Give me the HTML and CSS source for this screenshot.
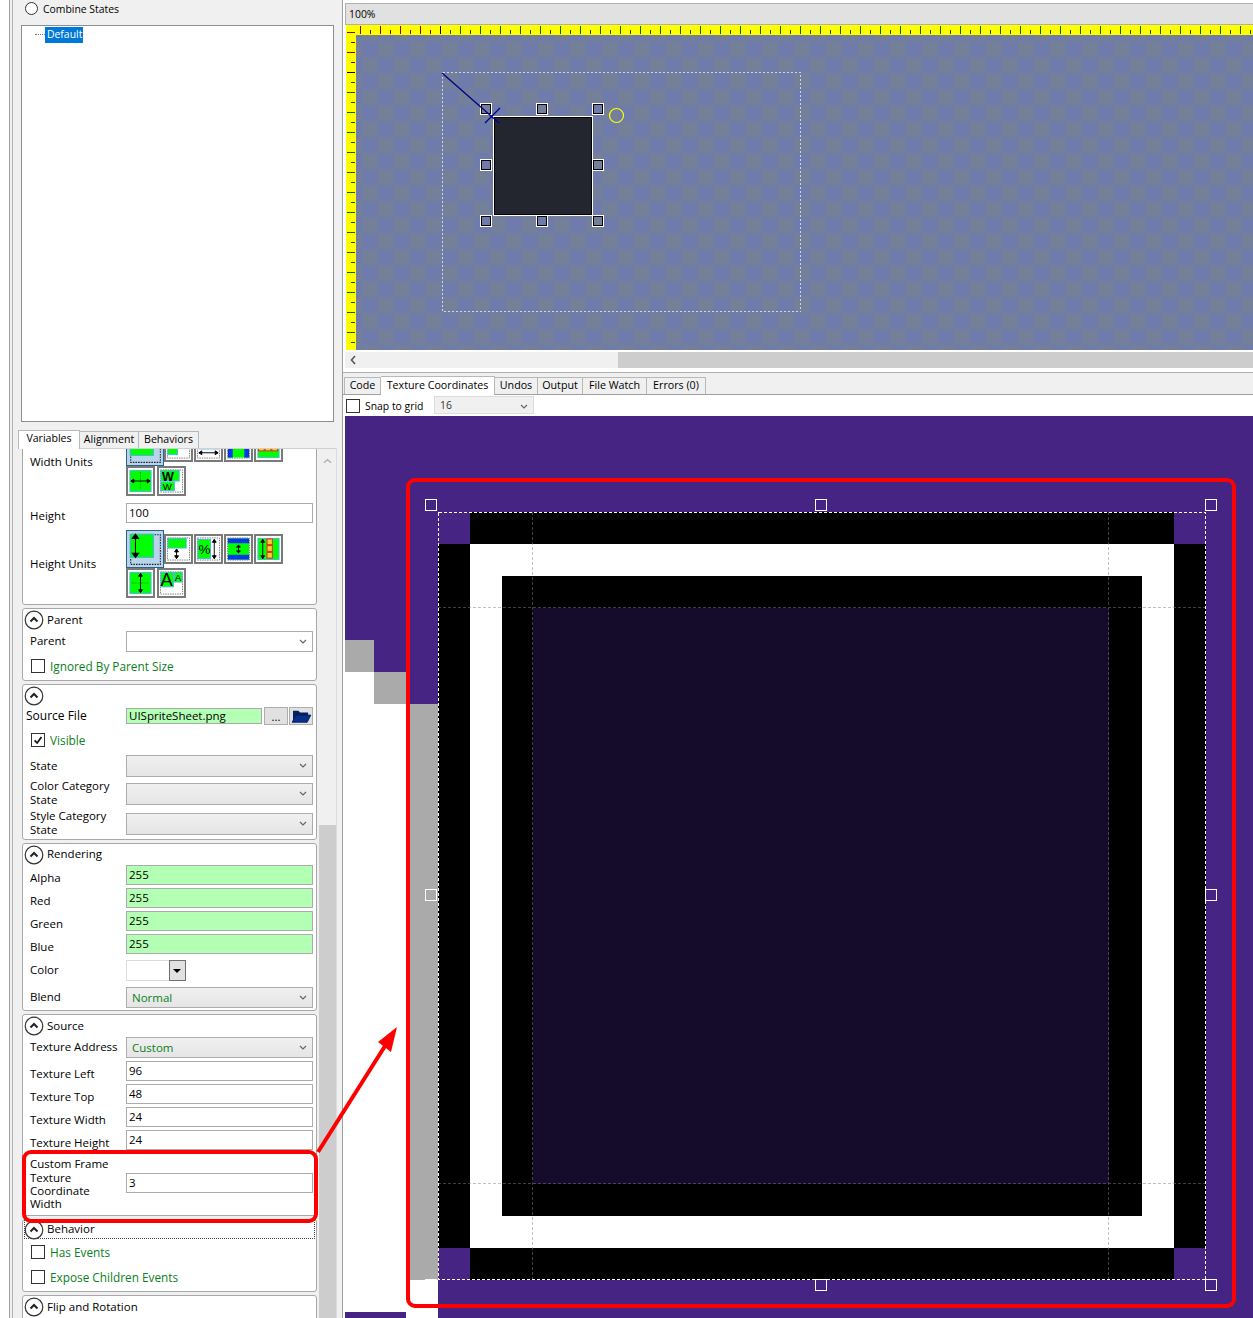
FILE: index.html
```html
<!DOCTYPE html>
<html>

<head>
    <title>Texture Coordinates</title>
    <link rel="stylesheet" href="styles.css">
</head>

<body>
    <!-- shared icons -->
    <svg class="defs" width="0" height="0">
        <defs>
            <symbol id="collapse" viewBox="0 0 20 20">
                <circle cx="10" cy="10" r="8.800" fill="#fff" stroke="#333" stroke-width="1.200"/>
                <path d="M6.500 11.500 10 8l3.500 3.500" fill="none" stroke="#222" stroke-width="2"/>
            </symbol>
            <symbol id="chevron" viewBox="0 0 8 5">
                <path d="M1 1 4 4l3-3" fill="none" stroke="#666" stroke-width="1.200"/>
            </symbol>
            <g id="abs-h">
                <rect x="3.500" y="3.500" width="28" height="28" fill="none" stroke="#223" stroke-dasharray="1.500 1"/>
                <rect x="3" y="3" width="22" height="22" fill="#0f0" stroke="#4db4e6"/>
                <path d="M8 3v22M5 7l3-4 3 4zM5 21l3 4 3-4z" fill="#000" stroke="#000"/>
            </g>
            <g id="rel-h">
                <rect x="1.500" y="1.500" width="23" height="23" fill="#fff" stroke="#777" stroke-dasharray="1.500 1"/>
                <rect x="2" y="2" width="19" height="10" fill="#0f0" stroke="#4db4e6"/>
                <path d="M11 13v10M9 16l2-3 2 3zM9 20l2 3 2-3z" fill="#000" stroke="#000"/>
            </g>
            <g id="pct-h">
                <rect x="1.500" y="1.500" width="23" height="23" fill="#fff" stroke="#777" stroke-dasharray="1.500 1"/>
                <rect x="2" y="3" width="13" height="20" fill="#0f0" stroke="#4db4e6"/>
                <text x="2.500" y="18" class="icon-pct">%</text>
                <path d="M19 3v20M17 6l2-3 2 3zM17 20l2 3 2-3z" fill="#000" stroke="#000"/>
            </g>
            <g id="ratio-h">
                <rect x="1.500" y="1.500" width="23" height="23" fill="#fff" stroke="#777" stroke-dasharray="1.500 1"/>
                <rect x="2" y="2" width="22" height="22" fill="#0f0"/>
                <rect x="2" y="2" width="22" height="5" fill="#0437e8"/>
                <rect x="2" y="19" width="22" height="5" fill="#0437e8"/>
                <path d="M13 9v8M11 11l2-2 2 2zM11 15l2 2 2-2z" fill="#000" stroke="#000"/>
            </g>
            <g id="kids-h">
                <rect x="2" y="2" width="22" height="22" fill="#0f0" stroke="#4db4e6"/>
                <path d="M7 3v20M5 6l2-3 2 3zM5 20l2 3 2-3z" fill="#000" stroke="#000"/>
                <rect x="11.500" y="2.500" width="5.500" height="6" fill="#fc3" stroke="#e22"/>
                <rect x="11.500" y="9.500" width="5.500" height="6" fill="#fc3" stroke="#e22"/>
                <rect x="11.500" y="16.500" width="5.500" height="6" fill="#fc3" stroke="#e22"/>
            </g>
            <g id="fill-h">
                <rect x="2" y="2" width="22" height="22" fill="#0f0" stroke="#4db4e6"/>
                <path d="M4 13h18" stroke="#0a0" stroke-dasharray="2 1"/>
                <path d="M13 3v20M11 6l2-3 2 3zM11 20l2 3 2-3z" fill="#000" stroke="#000"/>
            </g>
        </defs>
    </svg>

    <div class="left">
        <div class="left-inner">
            <div class="radio-row">
                <span class="radio"></span>
                <span class="tight">Combine States</span>
            </div>
            <div class="tree">
                <span class="tree-line"></span>
                <span class="tree-sel tight">Default</span>
            </div>

            <div class="tabs">
                <span class="tab tab-v active">Variables</span>
                <span class="tab tab-a">Alignment</span>
                <span class="tab tab-b">Behaviors</span>
            </div>
            <div class="tab-panel">
                <div class="scroller">
                    <div class="group group-first">
                        <div class="row">
                            <span class="lab">Width Units</span>
                            <div class="units">
                                <span class="unit selected"><svg viewBox="0 0 34 34"><use href="#abs-h" transform="matrix(0 1 1 0 0 0)"/></svg></span>
                                <span class="unit"><svg viewBox="0 0 26 26"><use href="#rel-h" transform="matrix(0 1 1 0 0 0)"/></svg></span>
                                <span class="unit"><svg viewBox="0 0 26 26"><use href="#pct-h" transform="matrix(0 1 1 0 0 0)"/></svg></span>
                                <span class="unit"><svg viewBox="0 0 26 26"><use href="#ratio-h" transform="matrix(0 1 1 0 0 0)"/></svg></span>
                                <span class="unit"><svg viewBox="0 0 26 26"><use href="#kids-h" transform="matrix(0 1 1 0 0 0)"/></svg></span>
                                <span class="unit unit-wrap"><svg viewBox="0 0 26 26"><use href="#fill-h" transform="matrix(0 1 1 0 0 0)"/></svg></span>
                                <span class="unit"><svg viewBox="0 0 26 26">
                                    <rect x="1.500" y="1.500" width="23" height="23" fill="#fff" stroke="#777" stroke-dasharray="1.500 1"/>
                                    <rect x="2" y="2" width="19" height="11" fill="#0f0" stroke="#4db4e6"/>
                                    <rect x="2" y="14" width="14" height="9" fill="#0f0" stroke="#4db4e6"/>
                                    <text x="3" y="12.500" class="icon-big">W</text>
                                    <text x="4" y="22.500" class="icon-small">W</text>
                                </svg></span>
                            </div>
                        </div>
                        <div class="row row-20 mt-7">
                            <span class="lab lab-low">Height</span>
                            <div class="field">100</div>
                        </div>
                        <div class="row mt-7">
                            <span class="lab">Height Units</span>
                            <div class="units">
                                <span class="unit selected"><svg viewBox="0 0 34 34"><use href="#abs-h"/></svg></span>
                                <span class="unit"><svg viewBox="0 0 26 26"><use href="#rel-h"/></svg></span>
                                <span class="unit"><svg viewBox="0 0 26 26"><use href="#pct-h"/></svg></span>
                                <span class="unit"><svg viewBox="0 0 26 26"><use href="#ratio-h"/></svg></span>
                                <span class="unit"><svg viewBox="0 0 26 26"><use href="#kids-h"/></svg></span>
                                <span class="unit unit-wrap"><svg viewBox="0 0 26 26"><use href="#fill-h"/></svg></span>
                                <span class="unit"><svg viewBox="0 0 26 26">
                                    <rect x="1.500" y="1.500" width="23" height="23" fill="#fff" stroke="#777" stroke-dasharray="1.500 1"/>
                                    <rect x="2" y="2" width="13" height="15" fill="#0f0" stroke="#4db4e6"/>
                                    <rect x="16" y="2" width="8" height="10" fill="#0f0" stroke="#4db4e6"/>
                                    <text x="1.500" y="16" class="icon-a">A</text>
                                    <text x="16.500" y="10.500" class="icon-small">A</text>
                                </svg></span>
                            </div>
                        </div>
                    </div>

                    <div class="group group-parent">
                        <div class="head"><svg class="collapse"><use href="#collapse"/></svg><span>Parent</span></div>
                        <div class="row row-21">
                            <span class="lab">Parent</span>
                            <div class="combo combo-white"><svg class="chev"><use href="#chevron"/></svg></div>
                        </div>
                        <div class="check-row check-28"><span class="check"></span><span class="green">Ignored By Parent Size</span></div>
                    </div>

                    <div class="group group-file">
                        <div class="head"><svg class="collapse"><use href="#collapse"/></svg></div>
                        <div class="row row-18">
                            <span class="lab lab-file">Source File</span>
                            <div class="field field-file">UISpriteSheet.png</div>
                            <span class="btn-dots">...</span>
                            <span class="btn-folder"><svg viewBox="0 0 24 18">
                                <path d="M3 5V3h6l2 2h9v3H7L3 14z" fill="#07205f"/>
                                <path d="M6.500 8H23l-4 8H2z" fill="#0a2f88" stroke="#021a5e"/>
                            </svg></span>
                        </div>
                        <div class="check-row check-30"><span class="check"><svg viewBox="0 0 14 14"><path d="M3 7.500 6 10.500 11 3.500" fill="none" stroke="#111" stroke-width="2"/></svg></span><span class="green">Visible</span></div>
                        <div class="row row-22">
                            <span class="lab">State</span>
                            <div class="combo"><svg class="chev"><use href="#chevron"/></svg></div>
                        </div>
                        <div class="row row-22 mt-6">
                            <span class="lab two">Color Category State</span>
                            <div class="combo"><svg class="chev"><use href="#chevron"/></svg></div>
                        </div>
                        <div class="row row-22 mt-8">
                            <span class="lab two">Style Category State</span>
                            <div class="combo"><svg class="chev"><use href="#chevron"/></svg></div>
                        </div>
                    </div>

                    <div class="group group-render">
                        <div class="head head-21"><svg class="collapse"><use href="#collapse"/></svg><span>Rendering</span></div>
                        <div class="row row-20"><span class="lab lab-low">Alpha</span><div class="field field-green">255</div></div>
                        <div class="row row-20 mt-3"><span class="lab lab-low">Red</span><div class="field field-green">255</div></div>
                        <div class="row row-20 mt-3"><span class="lab lab-low">Green</span><div class="field field-green">255</div></div>
                        <div class="row row-20 mt-3"><span class="lab lab-low">Blue</span><div class="field field-green">255</div></div>
                        <div class="row row-21 mt-6">
                            <span class="lab">Color</span>
                            <div class="color-pick"><span class="color-drop"></span></div>
                        </div>
                        <div class="row row-21 mt-6">
                            <span class="lab">Blend</span>
                            <div class="combo green-text">Normal<svg class="chev"><use href="#chevron"/></svg></div>
                        </div>
                    </div>

                    <div class="group group-source">
                        <div class="head"><svg class="collapse"><use href="#collapse"/></svg><span>Source</span></div>
                        <div class="row row-21">
                            <span class="lab">Texture Address</span>
                            <div class="combo green-text">Custom<svg class="chev"><use href="#chevron"/></svg></div>
                        </div>
                        <div class="row row-20 mt-3"><span class="lab lab-low">Texture Left</span><div class="field">96</div></div>
                        <div class="row row-20 mt-3"><span class="lab lab-low">Texture Top</span><div class="field">48</div></div>
                        <div class="row row-20 mt-3"><span class="lab lab-low">Texture Width</span><div class="field">24</div></div>
                        <div class="row row-20 mt-3"><span class="lab lab-low">Texture Height</span><div class="field">24</div></div>
                        <div class="row row-52 mt-7">
                            <span class="lab four">Custom Frame Texture Coordinate Width</span>
                            <div class="field">3</div>
                        </div>
                    </div>

                    <div class="group group-behavior">
                        <div class="head head-focus"><svg class="collapse"><use href="#collapse"/></svg><span>Behavior</span></div>
                        <div class="check-row check-25"><span class="check"></span><span class="green">Has Events</span></div>
                        <div class="check-row check-25"><span class="check"></span><span class="green">Expose Children Events</span></div>
                    </div>

                    <div class="group group-flip">
                        <div class="head"><svg class="collapse"><use href="#collapse"/></svg><span>Flip and Rotation</span></div>
                    </div>
                </div>
                <div class="vscroll">
                    <svg class="vscroll-up" viewBox="0 0 10 6"><path d="M1 5 5 1.500 9 5" fill="none" stroke="#b0b0b0" stroke-width="1.500"/></svg>
                    <div class="vscroll-thumb"></div>
                </div>
            </div>
        </div>
    </div>

    <div class="right">
        <div class="zoom-bar tight">100%</div>

        <svg class="editor" viewBox="346 25 907 325" shape-rendering="crispEdges">
            <defs>
                <pattern id="checker" x="442" y="73" width="32" height="32" patternUnits="userSpaceOnUse">
                    <rect width="32" height="32" fill="#6e7bab"/>
                    <rect width="16" height="16" fill="#747f99"/>
                    <rect x="16" y="16" width="16" height="16" fill="#747f99"/>
                </pattern>
                <pattern id="top-green" x="360" y="25" width="20" height="10" patternUnits="userSpaceOnUse">
                    <rect x="0" y="1" width="1" height="8" fill="#006400"/>
                    <rect x="10" y="5" width="1" height="4" fill="#006400"/>
                </pattern>
                <pattern id="top-red" x="360" y="25" width="20" height="10" patternUnits="userSpaceOnUse">
                    <rect x="0" y="1" width="1" height="8" fill="#8b0000"/>
                    <rect x="10" y="5" width="1" height="4" fill="#8b0000"/>
                </pattern>
                <pattern id="left-green" x="346" y="32" width="10" height="20" patternUnits="userSpaceOnUse">
                    <rect x="1" y="0" width="8" height="1" fill="#006400"/>
                    <rect x="5" y="10" width="4" height="1" fill="#006400"/>
                </pattern>
                <pattern id="left-red" x="346" y="32" width="10" height="20" patternUnits="userSpaceOnUse">
                    <rect x="1" y="0" width="8" height="1" fill="#8b0000"/>
                    <rect x="5" y="10" width="4" height="1" fill="#8b0000"/>
                </pattern>
            </defs>
            <rect x="356" y="35" width="897" height="315" fill="url(#checker)"/>
            <rect x="346" y="25" width="907" height="10" fill="#ff0"/>
            <rect x="346" y="25" width="10" height="325" fill="#ff0"/>
            <rect x="358" y="25" width="82" height="10" fill="url(#top-red)"/>
            <rect x="440" y="25" width="813" height="10" fill="url(#top-green)"/>
            <rect x="440" y="26" width="1" height="8" fill="#000"/>
            <rect x="346" y="27" width="10" height="45" fill="url(#left-red)"/>
            <rect x="346" y="72" width="10" height="278" fill="url(#left-green)"/>
            <rect x="347" y="72" width="8" height="1" fill="#000"/>

            <rect x="442.500" y="72.500" width="358" height="239" fill="none" stroke="#c9d8ee" stroke-dasharray="2 2"/>

            <rect x="494.500" y="117.500" width="97" height="97" fill="#1b1d24" fill-opacity=".9" stroke="#000"/>
            <rect x="493.500" y="116.500" width="99" height="99" fill="none" stroke="#fff"/>

            <g fill="none" stroke="#fff">
                <rect x="480.500" y="103.500" width="11" height="11"/>
                <rect x="536.500" y="103.500" width="11" height="11"/>
                <rect x="592.500" y="103.500" width="11" height="11"/>
                <rect x="480.500" y="159.500" width="11" height="11"/>
                <rect x="592.500" y="159.500" width="11" height="11"/>
                <rect x="480.500" y="215.500" width="11" height="11"/>
                <rect x="536.500" y="215.500" width="11" height="11"/>
                <rect x="592.500" y="215.500" width="11" height="11"/>
            </g>
            <g fill="none" stroke="#000">
                <rect x="481.500" y="104.500" width="9" height="9"/>
                <rect x="537.500" y="104.500" width="9" height="9"/>
                <rect x="593.500" y="104.500" width="9" height="9"/>
                <rect x="481.500" y="160.500" width="9" height="9"/>
                <rect x="593.500" y="160.500" width="9" height="9"/>
                <rect x="481.500" y="216.500" width="9" height="9"/>
                <rect x="537.500" y="216.500" width="9" height="9"/>
                <rect x="593.500" y="216.500" width="9" height="9"/>
            </g>
            <path d="M442 73 499 123M485 123 500 108" fill="none" stroke="#00008b" stroke-width="1.300" shape-rendering="auto"/>
            <circle cx="616.500" cy="115.500" r="7" fill="none" stroke="#ff0" stroke-width="1.200" shape-rendering="auto"/>
        </svg>

        <div class="hscroll">
            <svg class="hscroll-left" viewBox="0 0 6 10"><path d="M5 1 1.500 5 5 9" fill="none" stroke="#555" stroke-width="1.600"/></svg>
            <div class="hscroll-thumb"></div>
        </div>

        <div class="bottom-tabs">
            <span class="btab btab-code">Code</span>
            <span class="btab btab-tex active">Texture Coordinates</span>
            <span class="btab btab-undo">Undos</span>
            <span class="btab btab-out">Output</span>
            <span class="btab btab-watch">File Watch</span>
            <span class="btab btab-err">Errors (0)</span>
        </div>

        <div class="snap-row">
            <span class="check"></span>
            <span class="snap-label tight">Snap to grid</span>
            <div class="snap-combo tight">16<svg class="chev"><use href="#chevron"/></svg></div>
        </div>

        <svg class="texture" viewBox="345 416 908 902" shape-rendering="crispEdges">
            <rect x="345" y="416" width="908" height="902" fill="#452483"/>
            <!-- neighbouring sprite on the left -->
            <rect x="345" y="640" width="29" height="32" fill="#aaa"/>
            <rect x="374" y="672" width="32" height="32" fill="#aaa"/>
            <path d="M345 672h29v32h32v608h-61z" fill="#fff"/>
            <rect x="406" y="704" width="32" height="576" fill="#aaa"/>
            <rect x="406" y="1280" width="32" height="38" fill="#fff"/>

            <!-- the nine-slice frame -->
            <rect x="470" y="512" width="704" height="768" fill="#000"/>
            <rect x="438" y="544" width="768" height="704" fill="#000"/>
            <rect x="470" y="544" width="704" height="704" fill="#fff"/>
            <rect x="502" y="576" width="640" height="640" fill="#000"/>
            <rect x="533" y="608" width="576" height="576" fill="#150c2c"/>

            <g fill="none" stroke="#808080" stroke-opacity=".5" stroke-dasharray="3 2">
                <path d="M532.500 512v768M1108.500 512v768M438 607.500h768M438 1183.500h768"/>
            </g>
            <rect x="438.500" y="512.500" width="767" height="767" fill="none" stroke="#fff" stroke-dasharray="3 2"/>
            <g fill="none" stroke="#fff">
                <rect x="425.500" y="499.500" width="11" height="11"/>
                <rect x="815.500" y="499.500" width="11" height="11"/>
                <rect x="1205.500" y="499.500" width="11" height="11"/>
                <rect x="425.500" y="889.500" width="11" height="11"/>
                <rect x="1205.500" y="889.500" width="11" height="11"/>
                <rect x="425.500" y="1279.500" width="11" height="11"/>
                <rect x="815.500" y="1279.500" width="11" height="11"/>
                <rect x="1205.500" y="1279.500" width="11" height="11"/>
            </g>
        </svg>
    </div>

    <!-- red callouts drawn over the screenshot -->
    <svg class="callouts" viewBox="0 0 1253 1318">
        <rect x="24" y="1152" width="292" height="69" rx="7" fill="none" stroke="#f00" stroke-width="4"/>
        <rect x="408" y="480" width="826" height="826" rx="7" fill="none" stroke="#f00" stroke-width="4"/>
        <path d="M318 1152 385 1046" fill="none" stroke="#f00" stroke-width="4"/>
        <path d="M397 1027 378 1042 391 1052z" fill="#f00"/>
    </svg>
</body>

</html>
```

FILE: styles.css
```css
* {
    box-sizing: border-box;
}

body {
    margin: 0;
    width: 1253px;
    height: 1318px;
    overflow: hidden;
    display: flex;
    position: relative;
    background-color: #fff;
    font-family: "Open Sans", "Liberation Sans", sans-serif;
    font-size: 11.5px;
    color: #000;
}

.defs {
    position: absolute;
}

.tight {
    font-size: 10.4px;
}

.icon-pct {
    font-size: 14px;
    font-family: "Liberation Sans", sans-serif;
}

.icon-big {
    font-size: 13px;
    font-weight: bold;
    font-family: "Liberation Sans", sans-serif;
}

.icon-small {
    font-size: 10px;
    font-family: "Liberation Sans", sans-serif;
}

.icon-a {
    font-size: 19px;
    font-family: "Liberation Sans", sans-serif;
}

/* left side */

.left {
    width: 334px;
    height: 1318px;
    margin-left: 9px;
    border-left: 1px solid #a0a0a0;
    border-right: 1px solid #a0a0a0;
    background-color: #f0f0f0;
    flex-shrink: 0;
}

.left-inner {
    height: 100%;
    margin-left: 2px;
    border-left: 1px solid #b4b4b4;
    overflow: hidden;
}

.radio-row {
    height: 25px;
    padding: 0 0 8px 12px;
    display: flex;
    align-items: center;
    gap: 5px;
}

.radio {
    width: 13px;
    height: 13px;
    border: 1px solid #333;
    border-radius: 50%;
    background-color: #fff;
}

.tree {
    width: 313px;
    height: 397px;
    margin-left: 8px;
    padding: 1px 0 0 13px;
    border: 1px solid #8e8e8e;
    background-color: #fff;
    display: flex;
    align-items: flex-start;
}

.tree-line {
    width: 10px;
    margin-top: 7px;
    border-top: 1px dotted #777;
}

.tree-sel {
    width: 38px;
    height: 16px;
    padding-left: 2px;
    line-height: 15px;
    background-color: #0078d7;
    color: #fff;
}

.tabs {
    height: 19px;
    margin: 7px 0 0 5px;
    display: flex;
    align-items: flex-end;
}

.tab {
    height: 17px;
    font-size: 10.6px;
    line-height: 14px;
    text-align: center;
    background-color: #f0f0f0;
    border: 1px solid #b8b8b8;
    border-bottom: none;
    border-left: none;
}

.tab.active {
    height: 19px;
    line-height: 15px;
    background-color: #fff;
    border-left: 1px solid #b8b8b8;
    position: relative;
    z-index: 1;
    margin-bottom: -1px;
}

.tab-v {
    width: 62px;
}

.tab-a {
    width: 59px;
}

.tab-b {
    width: 60px;
}

.tab-panel {
    width: 319px;
    height: 870px;
    margin-left: 5px;
    padding-left: 4px;
    border-top: 1px solid #d0d0d0;
    border-right: 1px solid #dcdcdc;
    display: flex;
}

.scroller {
    width: 296px;
    height: 100%;
    overflow: hidden;
}

.group {
    width: 295px;
    margin-bottom: 3px;
    border: 1px solid #a8a8a8;
    border-radius: 3px;
    background-color: #fff;
}

.group-first {
    margin-top: -24px;
    padding: 2px 0 6px;
}

.group-parent {
    height: 73px;
}

.group-file {
    height: 156px;
}

.group-render {
    height: 168px;
}

.group-source {
    height: 202px;
}

.group-behavior {
    height: 73px;
}

.group-flip {
    height: 40px;
}

.head {
    height: 22px;
    padding-left: 1px;
    display: flex;
    align-items: center;
    gap: 3px;
}

.head span {
    margin-top: -2px;
}

.head-21 {
    height: 21px;
}

.head-focus {
    outline: 1px dotted #444;
    outline-offset: -1px;
    height: 19px;
    margin: 0 1px;
    padding-left: 0;
}

.collapse {
    width: 20px;
    height: 20px;
    flex-shrink: 0;
}

.row {
    display: flex;
    align-items: center;
    padding-left: 7px;
}

.row-18 {
    height: 18px;
}

.row-20 {
    height: 20px;
}

.row-21 {
    height: 21px;
}

.row-22 {
    height: 22px;
}

.row-52 {
    height: 52px;
}

.mt-3 {
    margin-top: 3px;
}

.mt-6 {
    margin-top: 6px;
}

.mt-7 {
    margin-top: 7px;
}

.mt-8 {
    margin-top: 8px;
}

.lab {
    width: 96px;
    margin-top: -2px;
    flex-shrink: 0;
}

.lab-low {
    margin-top: 0;
    padding-top: 4px;
}

.lab-file {
    margin-left: -4px;
    width: 100px;
    font-size: 12px;
}

.two {
    line-height: 14px;
    width: 90px;
    margin-right: 6px;
}

.four {
    line-height: 13.4px;
    width: 85px;
    margin-top: 0;
    margin-right: 11px;
    padding-top: 2px;
}

.field {
    width: 187px;
    height: 20px;
    padding-left: 2px;
    line-height: 17px;
    border: 1px solid #ababab;
    background-color: #fff;
}

.field-green {
    background-color: #b3ffb3;
}

.field-file {
    width: 136px;
    height: 16px;
    line-height: 13px;
    background-color: #b3ffb3;
    flex-shrink: 0;
}

.btn-dots {
    width: 24px;
    height: 18px;
    margin-left: 2px;
    line-height: 17px;
    text-align: center;
    background-color: #e1e1e1;
    border: 1px solid #adadad;
}

.btn-folder {
    width: 24px;
    height: 18px;
    margin-left: 1px;
    background-color: #e1e1e1;
    border: 1px solid #adadad;
    display: flex;
}

.btn-folder svg {
    width: 100%;
    height: 100%;
}

.combo {
    width: 187px;
    height: 100%;
    padding-left: 5px;
    line-height: 20px;
    position: relative;
    border: 1px solid #acacac;
    background: linear-gradient(#f0f0f0, #e5e5e5);
}

.combo-white {
    background: #fff;
}

.chev {
    position: absolute;
    right: 5px;
    top: 7px;
    width: 8px;
    height: 5px;
}

.green,
.green-text {
    color: #0a8020;
}

.green {
    font-size: 11.8px;
}

.check-row {
    display: flex;
    align-items: center;
    gap: 5px;
    padding-left: 8px;
}

.check-25 {
    height: 25px;
}

.check-28 {
    height: 28px;
}

.check-30 {
    height: 30px;
}

.check {
    width: 14px;
    height: 14px;
    border: 1px solid #333;
    background-color: #fff;
    display: block;
    flex-shrink: 0;
}

.check svg {
    display: block;
    width: 12px;
    height: 12px;
}

.color-pick {
    width: 60px;
    height: 21px;
    background-color: #fff;
    border: 1px solid #dcdcdc;
    display: flex;
    justify-content: flex-end;
}

.color-drop {
    width: 17px;
    margin: -1px;
    position: relative;
    background-color: #e1e1e1;
    border: 1px solid #707070;
}

.color-drop::after {
    content: "";
    position: absolute;
    left: 3px;
    top: 8px;
    border-left: 4px solid transparent;
    border-right: 4px solid transparent;
    border-top: 4px solid #000;
}

.units {
    width: 165px;
    display: flex;
    flex-wrap: wrap;
    align-items: center;
    column-gap: 1px;
}

.unit {
    width: 29px;
    height: 30px;
    background-color: #fff;
    border: 2px solid #7a7a7a;
    display: flex;
}

.unit svg {
    width: 100%;
    height: 100%;
}

.unit.selected {
    width: 38px;
    height: 38px;
    margin-right: -1px;
    background-color: #b8d4ea;
    border: 1px solid #2c628b;
}

.unit-wrap {
    margin-right: 1px;
}

.vscroll {
    width: 17px;
    height: 100%;
    position: relative;
    background-color: #f0f0f0;
    flex-shrink: 0;
    margin-left: 1px;
}

.vscroll-up {
    position: absolute;
    top: 9px;
    left: 4px;
    width: 9px;
    height: 6px;
}

.vscroll-thumb {
    position: absolute;
    top: 376px;
    bottom: 0;
    width: 100%;
    background-color: #cdcdcd;
}

/* right side */

.right {
    width: 910px;
    height: 1318px;
    padding-left: 2px;
    display: flex;
    flex-direction: column;
    background-color: #fff;
    flex-shrink: 0;
}

.zoom-bar {
    height: 22px;
    margin-top: 3px;
    padding-left: 3px;
    line-height: 20px;
    background-color: #e1e1e1;
    border: 1px solid #b0b0b0;
    border-right: none;
}

.editor {
    width: 907px;
    height: 325px;
    margin-left: 1px;
    flex-shrink: 0;
    display: block;
}

.hscroll {
    height: 16px;
    margin-top: 2px;
    position: relative;
    background-color: #f0f0f0;
    flex-shrink: 0;
}

.hscroll-left {
    position: absolute;
    left: 5px;
    top: 3px;
    width: 6px;
    height: 10px;
}

.hscroll-thumb {
    position: absolute;
    left: 273px;
    right: 0;
    height: 100%;
    background-color: #cdcdcd;
}

.bottom-tabs {
    height: 23px;
    margin: 4px 0 0 -2px;
    padding: 0 0 0 1px;
    display: flex;
    align-items: flex-end;
    background-color: #f0f0f0;
    border-top: 1px solid #b0b0b0;
    border-bottom: 1px solid #a0a0a0;
    flex-shrink: 0;
}

.btab {
    height: 17px;
    font-size: 10.7px;
    line-height: 15px;
    text-align: center;
    border: 1px solid #b8b8b8;
    border-bottom: none;
    border-left: none;
    background-color: #f0f0f0;
}

.btab.active {
    height: 19px;
    line-height: 16px;
    background-color: #fff;
    margin-bottom: -1px;
    position: relative;
}

.btab-code {
    width: 37px;
    border-left: 1px solid #b8b8b8;
}

.btab-tex {
    width: 114px;
}

.btab-undo {
    width: 43px;
}

.btab-out {
    width: 45px;
}

.btab-watch {
    width: 64px;
}

.btab-err {
    width: 59px;
}

.snap-row {
    height: 21px;
    padding-left: 1px;
    display: flex;
    align-items: center;
    flex-shrink: 0;
}

.snap-label {
    margin-left: 5px;
    width: 69px;
}

.snap-combo {
    width: 100px;
    height: 18px;
    margin-bottom: 2px;
    padding-left: 5px;
    line-height: 16px;
    position: relative;
    color: #333;
    background-color: #f0f0f0;
    border: 1px solid #dcdcdc;
}

.texture {
    width: 908px;
    height: 902px;
    flex-shrink: 0;
    display: block;
}

.callouts {
    position: absolute;
    left: 0;
    top: 0;
    width: 1253px;
    height: 1318px;
    pointer-events: none;
}
```
